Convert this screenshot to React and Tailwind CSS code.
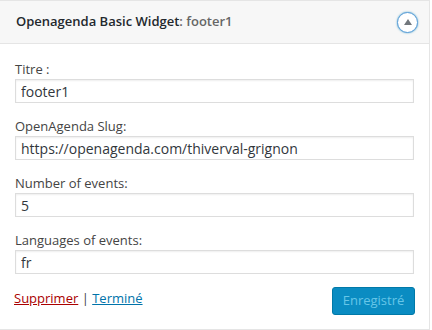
import React from 'react';

const fields = [
  { label: 'Titre :', value: 'footer1' },
  { label: 'OpenAgenda Slug:', value: 'https://openagenda.com/thiverval-grignon' },
  { label: 'Number of events:', value: '5' },
  { label: 'Languages of events:', value: 'fr' },
];

const Field = ({ label, value }) => (
  <div className="flex flex-col">
    <label className="text-[13px] leading-[18px] text-[#444]">{label}</label>
    <input
      readOnly
      value={value}
      className="mt-[1px] h-[24px] w-full border border-[#ddd] bg-white px-[5px] text-[14px] text-[#32373c] shadow-[inset_0_1px_2px_rgba(0,0,0,0.07)] outline-none"
    />
  </div>
);

export default function App() {
  return (
    <div className="h-[330px] w-[432px] bg-white font-['Open_Sans',sans-serif]">
      <div className="w-[430px] border-y border-r border-[#e5e5e5] bg-white">
        <div className="flex h-[43px] items-center justify-between border-b border-[#e5e5e5] bg-[#f7f7f7] pl-[16px] pr-[11px]">
          <h3 className="text-[13px] font-semibold text-[#23282d]">
            Openagenda Basic Widget<span className="text-[#666]">: footer1</span>
          </h3>
          <button className="flex h-[21px] w-[21px] items-center justify-center rounded-full border border-[#5b9dd9] bg-white shadow-[0_0_2px_rgba(30,140,190,0.8)]">
            <svg width="8" height="6" viewBox="0 0 8 6">
              <path d="M4 0 L8 6 L0 6 Z" fill="#72777c" />
            </svg>
          </button>
        </div>
        <div className="flex flex-col gap-[14px] px-[15px] pt-[16px]">
          {fields.map((f) => (
            <Field key={f.label} label={f.label} value={f.value} />
          ))}
        </div>
        <div className="flex items-start justify-between px-[14px] pb-[14px] pt-[13px]">
          <div className="pt-[2px] text-[13px] text-[#444]">
            <a href="#" className="text-[#a00] underline">Supprimer</a>
            <span> | </span>
            <a href="#" className="text-[#0073aa] underline">Terminé</a>
          </div>
          <button className="h-[28px] w-[83px] rounded-[3px] border border-[#0079a8] bg-[#0a8cc2] text-[13px] text-[#66c6e8]">
            Enregistré
          </button>
        </div>
      </div>
    </div>
  );
}
